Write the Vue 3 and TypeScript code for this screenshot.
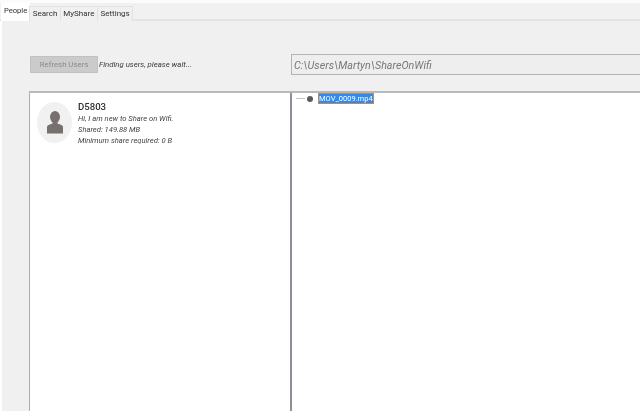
<script setup lang="ts">
const tabs: string[] = ['People', 'Search', 'MyShare', 'Settings']
const details: string[] = ['Hi, I am new to Share on Wifi.', 'Shared: 149.88 MB', 'Minimum share required: 0 B']
</script>

<template>
  <div class="window">
    <div class="tabbar">
      <div v-for="(t, i) in tabs" :key="t" class="tab" :class="{ active: i === 0 }">{{ t }}</div>
    </div>
    <div class="page">
      <div class="toolbar">
        <div class="left-tools">
          <div class="btn">Refresh Users</div>
          <div class="status">Finding users, please wait...</div>
        </div>
        <div class="path">C:\Users\Martyn\ShareOnWifi</div>
      </div>
      <div class="panels">
        <div class="users">
          <div class="user">
            <div class="avatar">
              <svg width="18" height="23" viewBox="0 0 18 23">
                <ellipse cx="9" cy="6" rx="5" ry="6" fill="#786f6f" />
                <path d="M6.500 11h5v1.500c3 .8 5.500 1.800 5.500 3.500v6.500H1V16c0-1.700 2.500-2.700 5.500-3.500z" fill="#786f6f" />
              </svg>
            </div>
            <div class="info">
              <div class="name">D5803</div>
              <div v-for="d in details" :key="d" class="detail">{{ d }}</div>
            </div>
          </div>
        </div>
        <div class="tree">
          <div class="node">
            <span class="dash"></span>
            <span class="dot"></span>
            <span class="file">MOV_0009.mp4</span>
          </div>
        </div>
      </div>
    </div>
  </div>
</template>

<style>
html, body { margin: 0; background: #fff; overflow: hidden; }
</style>

<style scoped>
.window {
  width: 640px;
  height: 411px;
  display: flex;
  flex-direction: column;
  overflow: hidden;
  background: #fff;
  font-family: Roboto, "Liberation Sans", Arial, sans-serif;
  filter: blur(0.35px);
}
.tabbar {
  display: flex;
  align-items: flex-end;
  height: 21px;
  padding-left: 1px;
  background: #f1f1f1;
  border-top: 3px solid #fbfbfb;
  box-sizing: border-box;
  border-bottom: 2px solid #e4e4e4;
}
.tab {
  height: 15px;
  margin-bottom: -2px;
  padding: 0 2.500px 1px;
  display: flex;
  align-items: center;
  font-size: 8px;
  color: #333;
  background: #f0f0f0;
  border: 1px solid #e2e2e2;
  border-bottom: none;
  margin-left: -1px;
  box-sizing: border-box;
}
.tab.active {
  height: 18px;
  padding: 0 2px 4px 2px;
  font-size: 7.600px;
  background: #fff;
  border-color: #fff;
  margin-left: 0;
  margin-right: 0;
}
.tab.active + .tab {
  margin-left: -1px;
}
.page {
  flex: 1;
  min-height: 0;
  display: flex;
  flex-direction: column;
  margin-left: 2px;
  background: #f0f0f0;
}
.toolbar {
  height: 70px;
  padding: 33px 0 0 28px;
  box-sizing: border-box;
  display: flex;
  align-items: flex-start;
}
.left-tools {
  width: 261px;
  margin-top: 2px;
  display: flex;
  align-items: center;
}
.btn {
  width: 68px;
  height: 17px;
  padding-bottom: 1px;
  background: #cbcbcb;
  border: 1px solid #c2c2c2;
  box-sizing: border-box;
  display: flex;
  align-items: center;
  justify-content: center;
  font-size: 7.800px;
  color: #8b8b8b;
}
.status {
  margin-left: 1px;
  font-size: 7.800px;
  font-style: italic;
  color: #3a3a3a;
}
.path {
  flex: 1;
  height: 21px;
  border: 1px solid #b4b4b4;
  border-right: none;
  box-sizing: border-box;
  background: #eeeeee;
  padding: 1px 0 0 2px;
  display: flex;
  align-items: center;
  font-size: 10.700px;
  font-style: italic;
  color: #777;
}
.panels {
  flex: 1;
  min-height: 0;
  display: flex;
  margin-left: 27px;
  border-top: 2px solid #b9b9bd;
  background: #fff;
}
.users {
  width: 263px;
  flex: none;
  box-sizing: border-box;
  border-left: 1px solid #a9a9b0;
  border-right: 2px solid #8e8e96;
  background: #fff;
}
.user {
  display: flex;
  padding: 8px 0 0 7px;
}
.avatar {
  width: 35px;
  height: 41px;
  margin-top: 1px;
  border-radius: 50%;
  background: #f1f1f1;
  display: flex;
  align-items: center;
  justify-content: center;
}
.info {
  margin-left: 6px;
}
.name {
  font-size: 9.600px;
  line-height: 12px;
  font-weight: 500;
  color: #2f2f2f;
}
.detail {
  font-size: 7.600px;
  line-height: 11px;
  font-style: italic;
  color: #444;
}
.tree {
  flex: 1;
  background: #fff;
}
.node {
  height: 11px;
  display: flex;
  align-items: center;
  padding-left: 4px;
}
.dash {
  width: 9px;
  height: 1px;
  background: #c4c4c4;
}
.dot {
  width: 6px;
  height: 6px;
  margin-left: 2px;
  border-radius: 50%;
  background: #5a5a5a;
}
.file {
  margin-left: 5px;
  padding: 0 1px;
  height: 11px;
  line-height: 11px;
  font-size: 7.500px;
  color: #fff;
  background: #2f8bf0;
  outline: 1px solid #b98a5a;
  outline-offset: -1px;
}
</style>
